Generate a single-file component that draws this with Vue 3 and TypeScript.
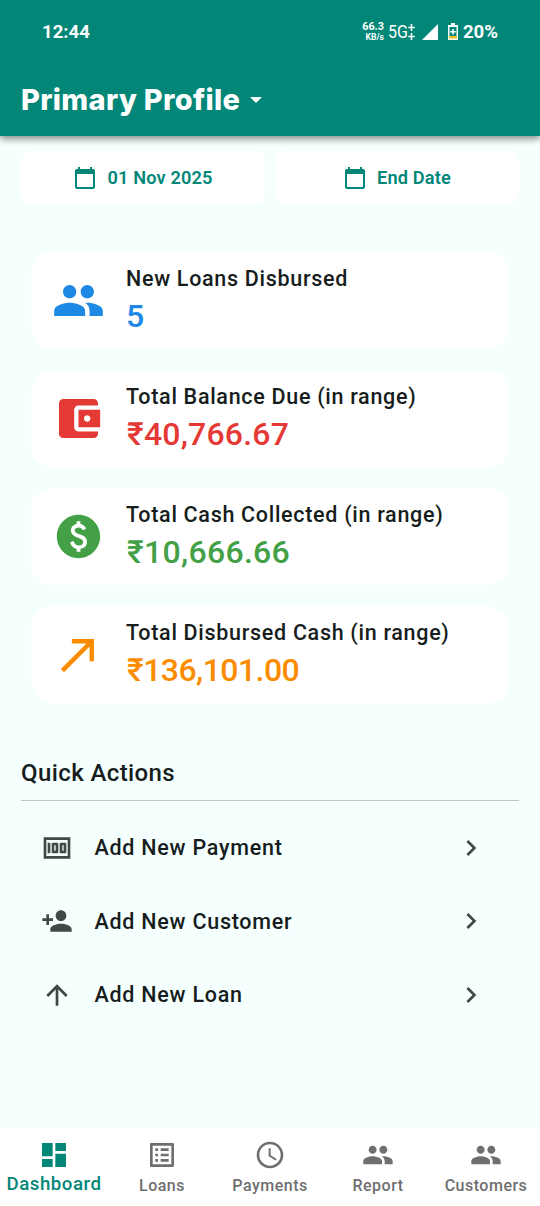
<script setup lang="ts">
interface Stat { icon: string; label: string; value: string; tone: string }
interface Action { icon: string; label: string }
interface Tab { icon: string; label: string; active?: boolean }

const icons: Record<string, string> = {
  calendar: 'M20 3h-1V1h-2v2H7V1H5v2H4c-1.1 0-2 .9-2 2v16c0 1.1.9 2 2 2h16c1.1 0 2-.9 2-2V5c0-1.1-.9-2-2-2zm0 18H4V8h16v13z',
  people: 'M16 11c1.66 0 2.99-1.34 2.99-3S17.66 5 16 5s-3 1.34-3 3 1.34 3 3 3zm-8 0c1.66 0 2.99-1.34 2.99-3S9.66 5 8 5 5 6.34 5 8s1.34 3 3 3zm0 2c-2.33 0-7 1.17-7 3.5V19h14v-2.5c0-2.33-4.67-3.5-7-3.5zm8 0c-.29 0-.62.02-.97.05 1.16.84 1.97 1.97 1.97 3.45V19h6v-2.5c0-2.33-4.67-3.5-7-3.5z',
  wallet: 'M21 18v1c0 1.1-.9 2-2 2H5c-1.11 0-2-.9-2-2V5c0-1.1.89-2 2-2h14c1.1 0 2 .9 2 2v1h-9c-1.11 0-2 .9-2 2v8c0 1.1.89 2 2 2h9zm-9-2h10V8H12v8zm4-2.5c-.83 0-1.5-.67-1.5-1.5s.67-1.5 1.5-1.5 1.5.67 1.5 1.5-.67 1.5-1.5 1.5z',
  dollar: 'M12 2C6.48 2 2 6.48 2 12s4.48 10 10 10 10-4.48 10-10S17.52 2 12 2zm.88 15.76V19h-1.75v-1.29c-.74-.18-2.39-.77-3.02-2.96l1.65-.67c.06.22.58 2.09 2.4 2.09.93 0 1.98-.48 1.98-1.61 0-.96-.7-1.46-2.28-2.03-1.1-.39-3.35-1.03-3.35-3.31 0-.1.01-2.4 2.62-2.96V5h1.75v1.24c1.84.32 2.51 1.79 2.66 2.23l-1.58.67c-.11-.35-.59-1.34-1.9-1.34-.7 0-1.81.37-1.81 1.39 0 .95.86 1.31 2.64 1.9 2.4.83 3.01 2.05 3.01 3.45 0 2.63-2.5 3.13-3.02 3.22z',
  made: 'M9 5v2h6.59L4 18.59 5.41 20 17 8.41V15h2V5z',
  money: 'M5 8h2v8H5zm7 0H9c-.55 0-1 .45-1 1v6c0 .55.45 1 1 1h3c.55 0 1-.45 1-1V9c0-.55-.45-1-1-1zm-1 6h-1v-4h1v4zm7-6h-3c-.55 0-1 .45-1 1v6c0 .55.45 1 1 1h3c.55 0 1-.45 1-1V9c0-.55-.45-1-1-1zm-1 6h-1v-4h1v4zM2 4v16h20V4H2zm2 14V6h16v12H4z',
  addPerson: 'M15 12c2.21 0 4-1.79 4-4s-1.79-4-4-4-4 1.79-4 4 1.79 4 4 4zm-9-2V7H4v3H1v2h3v3h2v-3h3v-2H6zm9 4c-2.67 0-8 1.34-8 4v2h16v-2c0-2.66-5.33-4-8-4z',
  up: 'M4 12l1.41 1.41L11 7.83V20h2V7.83l5.58 5.59L20 12l-8-8-8 8z',
  chevron: 'M10 6L8.59 7.41 13.17 12l-4.58 4.59L10 18l6-6z',
  dashboard: 'M3 13h8V3H3v10zm0 8h8v-6H3v6zm10 0h8V11h-8v10zm0-18v6h8V3h-8z',
  list: 'M19 5v14H5V5h14m1.1-2H3.9c-.5 0-.9.4-.9.9v16.2c0 .4.4.9.9.9h16.2c.4 0 .9-.5.9-.9V3.9c0-.5-.5-.9-.9-.9zM11 7h6v2h-6V7zm0 4h6v2h-6v-2zm0 4h6v2h-6zM7 7h2v2H7zm0 4h2v2H7zm0 4h2v2H7z',
  clock: 'M11.99 2C6.47 2 2 6.48 2 12s4.47 10 9.99 10C17.52 22 22 17.52 22 12S17.52 2 11.99 2zM12 20c-4.42 0-8-3.58-8-8s3.58-8 8-8 8 3.58 8 8-3.58 8-8 8zm.5-13H11v6l5.25 3.15.75-1.23-4.5-2.67z'
}

const dates = ['01 Nov 2025', 'End Date']
const stats: Stat[] = [
  { icon: 'people', label: 'New Loans Disbursed', value: '5', tone: 'blue' },
  { icon: 'wallet', label: 'Total Balance Due (in range)', value: '₹40,766.67', tone: 'red' },
  { icon: 'dollar', label: 'Total Cash Collected (in range)', value: '₹10,666.66', tone: 'green' },
  { icon: 'made', label: 'Total Disbursed Cash (in range)', value: '₹136,101.00', tone: 'orange' }
]
const actions: Action[] = [
  { icon: 'money', label: 'Add New Payment' },
  { icon: 'addPerson', label: 'Add New Customer' },
  { icon: 'up', label: 'Add New Loan' }
]
const tabs: Tab[] = [
  { icon: 'dashboard', label: 'Dashboard', active: true },
  { icon: 'list', label: 'Loans' },
  { icon: 'clock', label: 'Payments' },
  { icon: 'people', label: 'Report' },
  { icon: 'people', label: 'Customers' }
]
</script>

<template>
  <div class="screen">
    <header class="top">
      <div class="status">
        <span class="time">12:44</span>
        <div class="indicators">
          <div class="speed"><span>66.3</span><small>KB/s</small></div>
          <span class="net">5G</span>
          <svg class="plus" viewBox="0 0 7 18"><path d="M3.5 1v7M.3 4.5h6.4M3.5 10v7M.3 13.5h6.4" /></svg>
          <svg class="signal" viewBox="0 0 16 16"><path d="M16 0v16H0z" /></svg>
          <svg class="battery" viewBox="0 0 10 17">
            <path fill="#fff" d="M3 0h4v2h3v15H0V2h3z" />
            <path fill="#018678" d="M1.5 4h7v9h-7z" />
            <path fill="#e5c02b" d="M1 13h8v2.5H1z" />
            <path fill="#fff" d="M4.2 6h1.6v2h2v1.6h-2v2H4.2v-2h-2V8h2z" />
          </svg>
          <span class="pct">20%</span>
        </div>
      </div>
      <div class="profile">
        <h1>Primary Profile</h1>
        <svg class="caret" viewBox="0 0 12 6"><path d="M0 0h12L6 6z" /></svg>
      </div>
    </header>

    <main>
      <div class="dates">
        <button v-for="d in dates" :key="d" class="date">
          <svg viewBox="0 0 24 24"><path :d="icons.calendar" /></svg>
          <span>{{ d }}</span>
        </button>
      </div>

      <section class="stats">
        <article v-for="s in stats" :key="s.label" class="card" :class="s.tone">
          <svg viewBox="0 0 24 24"><path :d="icons[s.icon]" /></svg>
          <div class="info">
            <span class="label">{{ s.label }}</span>
            <span class="value">{{ s.value }}</span>
          </div>
        </article>
      </section>

      <section class="quick">
        <h2>Quick Actions</h2>
        <ul>
          <li v-for="a in actions" :key="a.label">
            <svg class="lead" viewBox="0 0 24 24"><path :d="icons[a.icon]" /></svg>
            <span>{{ a.label }}</span>
            <svg class="go" viewBox="0 0 24 24"><path :d="icons.chevron" /></svg>
          </li>
        </ul>
      </section>
    </main>

    <nav>
      <div v-for="t in tabs" :key="t.label" class="tab" :class="{ active: t.active }">
        <svg viewBox="0 0 24 24"><path :d="icons[t.icon]" /></svg>
        <span>{{ t.label }}</span>
      </div>
    </nav>
  </div>
</template>

<style>
body { margin: 0; }
</style>

<style scoped>
* { box-sizing: border-box; }
svg { display: block; flex: none; fill: currentColor; }
.screen { width: 540px; height: 1206px; display: flex; flex-direction: column; background: #f5fffe; font-family: Roboto, "Noto Sans", sans-serif; color: #161d1c; overflow: hidden; white-space: nowrap; }
.top { height: 136px; flex: none; background: #018678; color: #fff; box-shadow: 0 3px 7px rgba(0, 0, 0, .45); z-index: 1; }
.status { height: 62px; padding: 1px 42px 0 42px; display: flex; align-items: center; justify-content: space-between; }
.time { font-size: 18.6px; font-weight: 700; }
.indicators { display: flex; align-items: center; }
.speed { display: flex; flex-direction: column; align-items: flex-end; font-size: 10.8px; line-height: 11px; font-weight: 700; }
.speed small { font-size: 8.5px; line-height: 10px; }
.net { margin-left: 4px; font-size: 19px; line-height: 20px; transform: scaleX(.84); transform-origin: left; width: 20px; }
.plus { width: 7px; height: 18px; stroke: #fff; stroke-width: 1.5; }
.signal { width: 16px; height: 16px; margin-left: 7px; }
.battery { width: 10px; height: 17px; margin: 0 5px 0 10px; }
.pct { font-size: 18.6px; font-weight: 700; }
.profile { display: flex; align-items: center; height: 76px; padding-left: 21px; }
h1 { margin: 0; font: 800 29px/40px Inter, sans-serif; letter-spacing: .32px; }
.caret { width: 12px; height: 6px; margin-left: 10px; }
main { flex: 1; display: flex; flex-direction: column; }
.dates { display: flex; gap: 10px; padding: 15px 21px 0; }
.date { flex: 1; height: 53px; display: flex; align-items: center; justify-content: center; gap: 10px; padding-top: 2px; border: 0; border-radius: 11px; background: #fff; color: #018678; font: 600 18.2px/24px Roboto, sans-serif; letter-spacing: .14px; }
.date svg { width: 24px; height: 24px; }
.stats { display: flex; flex-direction: column; gap: 21px; padding: 48px 31px 0; }
.card { height: 97px; display: flex; align-items: center; gap: 21px; padding-left: 21px; border-radius: 21px; background: #fff; }
.card svg { width: 53px; height: 53px; }
.red svg, .green svg { padding: .5px; }
.info { display: flex; flex-direction: column; padding-bottom: 1px; }
.label { font-size: 21.5px; line-height: 32px; font-weight: 500; letter-spacing: .7px; }
.value { font-size: 32px; line-height: 43px; font-weight: 500; padding-left: 1px; }
.blue .value { padding-left: 0; }
.blue svg, .blue .value { color: #1e88e5; }
.red svg, .red .value { color: #e53935; }
.red .value { letter-spacing: .2px; }
.green .value { letter-spacing: .3px; }
.green svg, .green .value { color: #43a047; }
.orange svg, .orange .value { color: #fb8c00; }
.orange .value { letter-spacing: -.55px; }
.quick { padding: 53px 21px 0; }
h2 { margin: 0; height: 45px; border-bottom: 1px solid #bec9c6; font-size: 24px; line-height: 34px; font-weight: 500; letter-spacing: .4px; }
ul { list-style: none; margin: 10px 0 0; padding: 0; }
li { height: 73.6px; display: flex; align-items: center; padding: 0 32px 0 20px; font-size: 21.5px; font-weight: 500; letter-spacing: .75px; }
li span { flex: 1; margin-left: 21.5px; }
.lead { width: 32px; height: 32px; color: #3f4947; }
.go { width: 32px; height: 32px; color: #3f4947; }
nav { height: 77px; flex: none; display: flex; background: #fff; }
.tab { flex: 1; min-width: 0; display: flex; flex-direction: column; align-items: center; color: #6f6f6f; font-size: 16px; font-weight: 500; padding-top: 9.5px; }
.tab svg { width: 32px; height: 32px; }
.tab span { line-height: 22px; margin-top: 4.5px; letter-spacing: .5px; }
.tab.active { color: #018678; font-size: 18.7px; }
.tab.active span { margin-top: 2.5px; }
</style>
